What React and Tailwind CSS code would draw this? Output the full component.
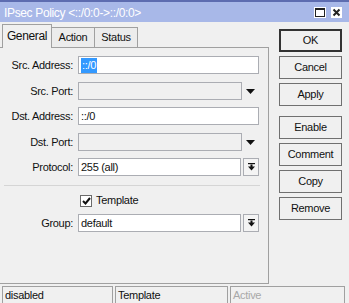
import React from "react";

const font = "font-['Liberation_Sans',Arial,sans-serif]";

function Label({ children }) {
  return (
    <div className="w-[74px] shrink-0 pr-[1px] text-right text-[11px] tracking-[-0.3px] text-[#111] leading-none">
      {children}
    </div>
  );
}

function Input({ children, disabled, w }) {
  return (
    <div
      className={`h-[18px] ${w} border border-[#abadb3] ${disabled ? "bg-[#f0f0f0]" : "bg-white"} flex items-center pl-[2px] text-[11px] tracking-[-0.3px] text-[#111] leading-none`}
    >
      {children}
    </div>
  );
}

function DownArrow() {
  return (
    <div className="w-[17px] h-[18px] flex items-center justify-center">
      <svg width="9" height="5" viewBox="0 0 9 5">
        <polygon points="0,0 9,0 4.5,5" fill="#111" />
      </svg>
    </div>
  );
}

function DropBtn() {
  return (
    <div className="ml-[2px] w-[16px] h-[18px] border border-[#abadb3] bg-[#f4f4f4] flex items-center justify-center">
      <svg width="7" height="8" viewBox="0 0 7 8">
        <rect x="0" y="0" width="7" height="1.2" fill="#111" />
        <rect x="2.5" y="1.5" width="2" height="2.5" fill="#111" />
        <polygon points="0,3.5 7,3.5 3.5,7.5" fill="#111" />
      </svg>
    </div>
  );
}

function Btn({ children, focus, className = "" }) {
  return (
    <div
      className={`w-[63px] h-[23px] flex items-center justify-center ${focus ? "border-2 border-[#333]" : "border border-[#707070]"} bg-[#f0f0f0] text-[11px] tracking-[-0.3px] text-[#111] leading-none ${className}`}
    >
      {children}
    </div>
  );
}

export default function App() {
  return (
    <div className={`w-[349px] h-[303px] overflow-hidden bg-[#f0f0f0] ${font} flex flex-col`}>
      {/* Title bar */}
      <div className="h-[22px] shrink-0 border-t-2 border-[#5d6cb0] bg-[#a8b8e8] flex items-center pl-[4px] pr-[7px]">
        <div className="text-white text-[12px] tracking-[-0.35px] leading-none mt-[1px]">
          IPsec Policy &lt;::/0:0-&gt;::/0:0&gt;
        </div>
        <div className="ml-auto flex items-center gap-[5px] mt-[1px]">
          <svg width="12" height="11" viewBox="0 0 12 11">
            <rect x="0" y="0" width="12" height="11" fill="#fff" />
            <rect x="1.5" y="1.5" width="9" height="8" fill="none" stroke="#222" strokeWidth="1" />
            <rect x="1.5" y="1.5" width="9" height="1.5" fill="#222" />
          </svg>
          <svg width="11" height="11" viewBox="0 0 11 11">
            <rect x="0" y="0" width="11" height="11" fill="#fff" />
            <path d="M2.5 2.5 L8.5 8.5 M8.5 2.5 L2.5 8.5" stroke="#222" strokeWidth="2" />
          </svg>
        </div>
      </div>

      {/* Body */}
      <div className="flex flex-1">
        {/* Left: tabs + panel */}
        <div className="w-[269px] flex flex-col">
          <div className="h-[25px] flex items-end pl-[2px]">
            <div className="relative z-10 -mb-px h-[24px] w-[50px] border-t border-l border-r border-[#a0a0a0] bg-[#f0f0f0] flex items-center justify-center text-[12px] tracking-[-0.35px] text-[#111] leading-none pb-[2px]">
              General
            </div>
            <div className="h-[20px] w-[43px] border-t border-r border-[#a0a0a0] bg-[#ececec] flex items-center justify-center text-[11px] tracking-[-0.3px] text-[#111] leading-none">
              Action
            </div>
            <div className="h-[20px] w-[43px] border-t border-r border-[#a0a0a0] bg-[#ececec] flex items-center justify-center text-[11px] tracking-[-0.3px] text-[#111] leading-none">
              Status
            </div>
          </div>
          <div className="h-[237px] border-t border-r border-b border-[#a0a0a0] flex flex-col pt-[8px] pl-[4px]">
            <div className="flex items-center h-[18px] ml-[-4px]">
              <Label>Src. Address:</Label>
              <div className="ml-[4px]">
                <Input w="w-[181px]">
                  <span className="bg-[#3399ff] text-white h-[15px] flex items-center px-[1px]">::/0</span>
                </Input>
              </div>
            </div>
            <div className="flex items-center h-[18px] mt-[8px] ml-[-4px]">
              <Label>Src. Port:</Label>
              <div className="ml-[4px] flex items-center">
                <Input disabled w="w-[164px]" />
                <DownArrow />
              </div>
            </div>
            <div className="flex items-center h-[18px] mt-[7px] ml-[-4px]">
              <Label>Dst. Address:</Label>
              <div className="ml-[4px]">
                <Input w="w-[181px]">::/0</Input>
              </div>
            </div>
            <div className="flex items-center h-[18px] mt-[8px] ml-[-4px]">
              <Label>Dst. Port:</Label>
              <div className="ml-[4px] flex items-center">
                <Input disabled w="w-[164px]" />
                <DownArrow />
              </div>
            </div>
            <div className="flex items-center h-[18px] mt-[7px] ml-[-4px]">
              <Label>Protocol:</Label>
              <div className="ml-[4px] flex items-center">
                <Input w="w-[163px]">255 (all)</Input>
                <DropBtn />
              </div>
            </div>
            <div className="mt-[9px] w-[256px] h-px bg-[#d5d5d5]" />
            <div className="flex items-center h-[13px] mt-[8px] ml-[76px]">
              <div className="w-[12px] h-[12px] border border-[#6a6a6a] bg-white flex items-center justify-center">
                <svg width="9" height="8" viewBox="0 0 9 8">
                  <path d="M1 4 L3.5 6.5 L8 1" fill="none" stroke="#111" strokeWidth="2" />
                </svg>
              </div>
              <div className="ml-[4px] text-[11px] tracking-[-0.3px] text-[#111] leading-none">Template</div>
            </div>
            <div className="flex items-center h-[18px] mt-[7px] ml-[-4px]">
              <Label>Group:</Label>
              <div className="ml-[4px] flex items-center">
                <Input w="w-[163px]">default</Input>
                <DropBtn />
              </div>
            </div>
          </div>
        </div>

        {/* Right: buttons */}
        <div className="flex flex-col pt-[7px] pl-[10px] gap-[4px]">
          <Btn focus>OK</Btn>
          <Btn>Cancel</Btn>
          <Btn>Apply</Btn>
          <Btn className="mt-[6px]">Enable</Btn>
          <Btn>Comment</Btn>
          <Btn>Copy</Btn>
          <Btn>Remove</Btn>
        </div>
      </div>

      {/* Status bar */}
      <div className="h-[18px] shrink-0 mt-[2px] flex pl-[2px] gap-[2px]">
        <div className="w-[111px] border-t border-l border-r border-[#a0a0a0] pl-[2px] pt-[3px] text-[11px] tracking-[-0.3px] text-[#111] leading-none">
          disabled
        </div>
        <div className="w-[113px] border-t border-l border-r border-[#a0a0a0] pl-[2px] pt-[3px] text-[11px] tracking-[-0.3px] text-[#111] leading-none">
          Template
        </div>
        <div className="w-[115px] border-t border-l border-r border-[#a0a0a0] pl-[2px] pt-[3px] text-[11px] tracking-[-0.3px] text-[#a8a8a8] leading-none">
          Active
        </div>
      </div>
    </div>
  );
}
